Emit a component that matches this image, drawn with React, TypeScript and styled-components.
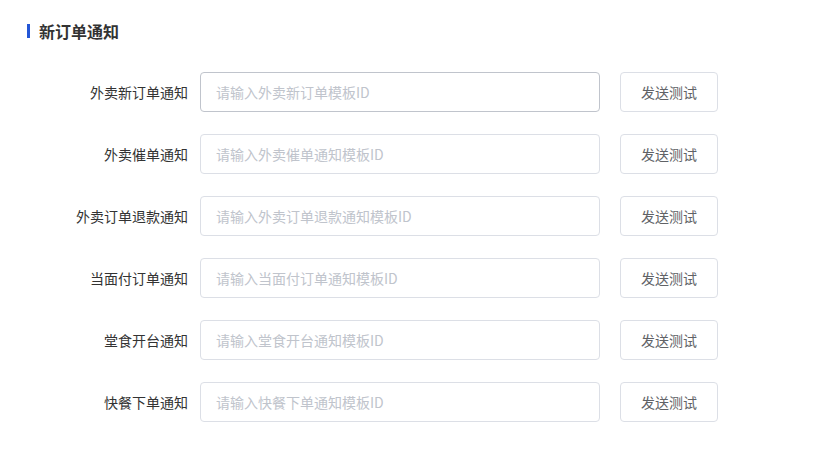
import React from "react";
import styled, { createGlobalStyle } from "styled-components";

const Global = createGlobalStyle`
  html, body { margin: 0; padding: 0; background: #fff; }
  body { font-family: "Noto Sans CJK SC", "Liberation Sans", sans-serif; }
`;

const Page = styled.div`
  padding: 20px 0 0 0;
`;

const Title = styled.div`
  display: flex;
  align-items: center;
  gap: 9px;
  padding-left: 27px;
  height: 22px;
  font-size: 16px;
  font-weight: 700;
  color: #333;
`;

const Bar = styled.span`
  display: block;
  width: 3px;
  height: 14px;
  background: #2456d6;
`;

const Form = styled.div`
  display: flex;
  flex-direction: column;
  gap: 22px;
  margin-top: 30px;
`;

const Row = styled.div`
  display: flex;
  align-items: center;
  height: 40px;
`;

const Label = styled.label`
  width: 200px;
  box-sizing: border-box;
  padding-right: 12px;
  text-align: right;
  font-size: 14px;
  color: #333;
`;

const Input = styled.input<{ $active?: boolean }>`
  width: 400px;
  height: 40px;
  box-sizing: border-box;
  border: 1px solid ${(p) => (p.$active ? "#c0c4cc" : "#dcdfe6")};
  border-radius: 4px;
  padding: 0 15px;
  font-size: 14px;
  font-family: inherit;
  color: #606266;
  outline: none;
  &::placeholder { color: #c0c4cc; }
`;

const Button = styled.button`
  margin-left: 20px;
  width: 98px;
  height: 40px;
  box-sizing: border-box;
  border: 1px solid #dcdfe6;
  border-radius: 4px;
  background: #fff;
  font-size: 14px;
  font-family: inherit;
  color: #606266;
  padding: 0;
  cursor: pointer;
`;

const rows = [
  { label: "外卖新订单通知", ph: "请输入外卖新订单模板ID", active: true },
  { label: "外卖催单通知", ph: "请输入外卖催单通知模板ID" },
  { label: "外卖订单退款通知", ph: "请输入外卖订单退款通知模板ID" },
  { label: "当面付订单通知", ph: "请输入当面付订单通知模板ID" },
  { label: "堂食开台通知", ph: "请输入堂食开台通知模板ID" },
  { label: "快餐下单通知", ph: "请输入快餐下单通知模板ID" },
];

export default function App() {
  return (
    <Page>
      <Global />
      <Title>
        <Bar />
        新订单通知
      </Title>
      <Form>
        {rows.map((r) => (
          <Row key={r.label}>
            <Label>{r.label}</Label>
            <Input $active={r.active} placeholder={r.ph} />
            <Button>发送测试</Button>
          </Row>
        ))}
      </Form>
    </Page>
  );
}
